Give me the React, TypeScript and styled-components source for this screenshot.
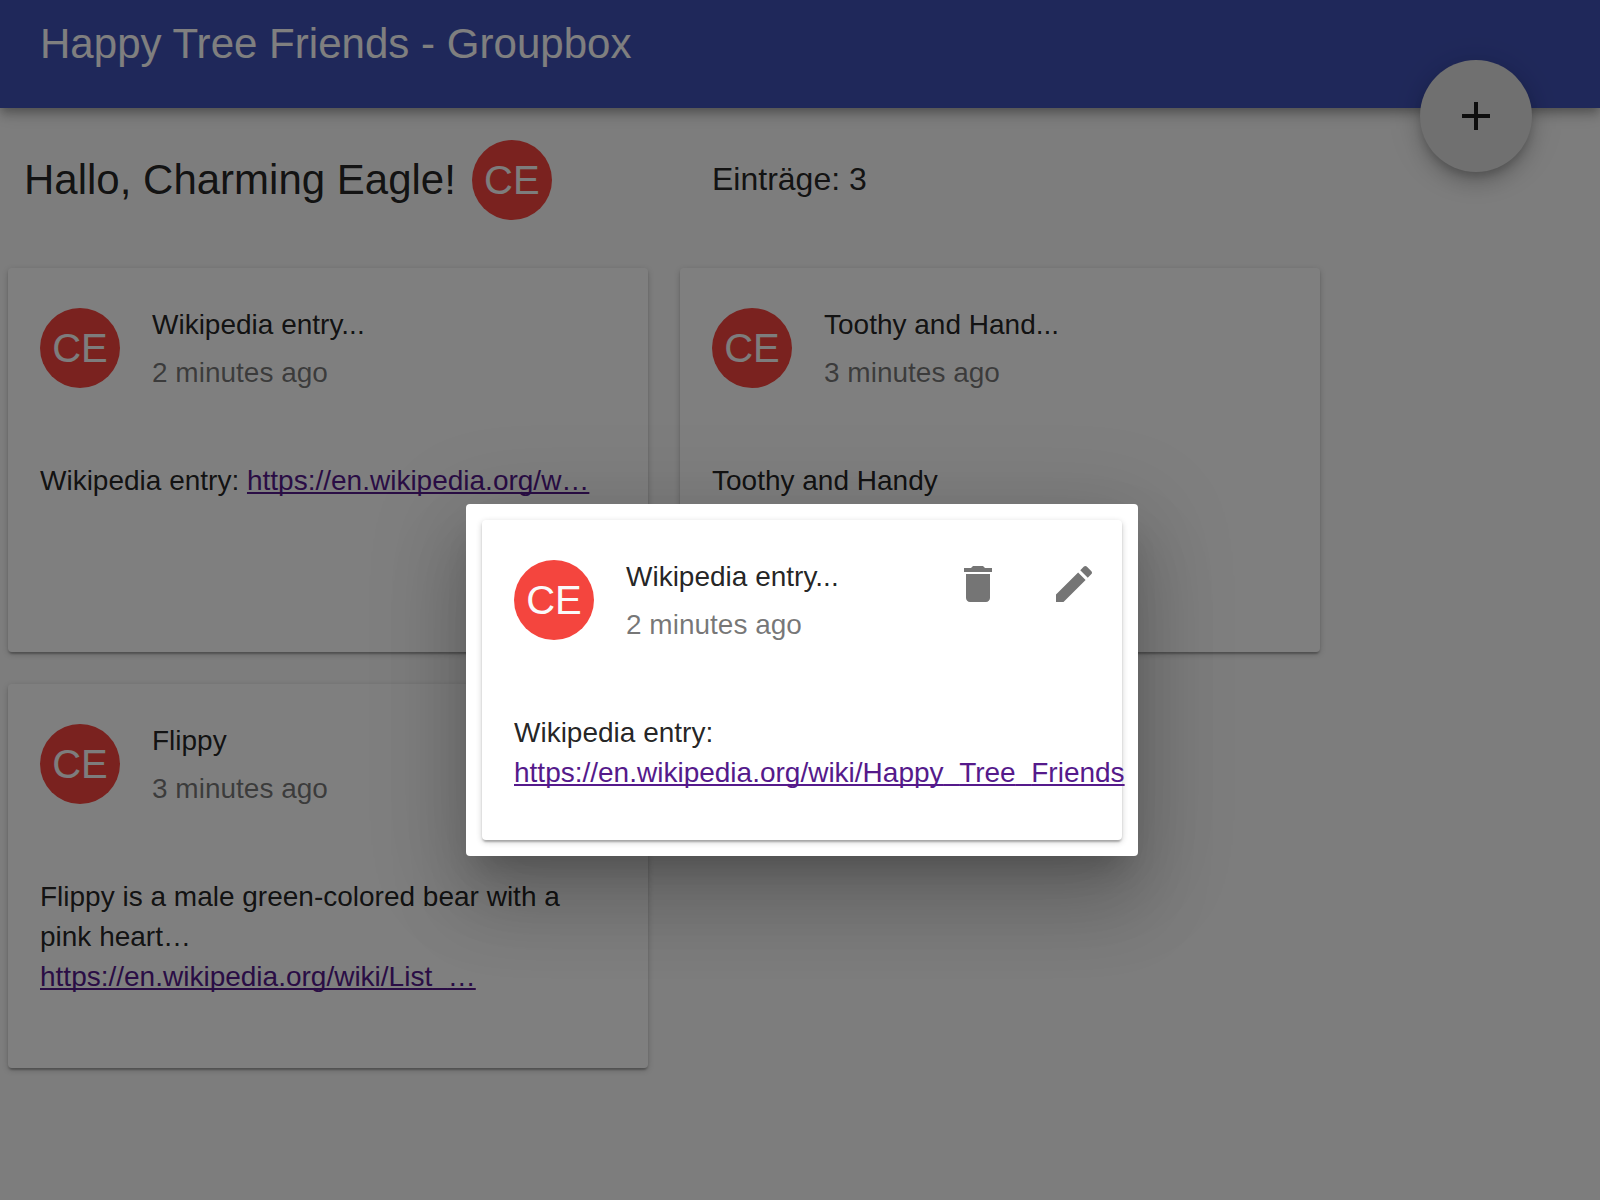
import React from 'react';
import styled, { createGlobalStyle } from 'styled-components';

const GlobalStyle = createGlobalStyle`
  * { box-sizing: border-box; }
  html, body { margin: 0; padding: 0; background: #fafafa; }
  body {
    font-family: "Liberation Sans", Arial, Helvetica, sans-serif;
    font-size: 28px;
    line-height: 40px;
    color: rgba(0, 0, 0, 0.87);
    overflow: hidden;
    -webkit-font-smoothing: antialiased;
  }
`;

const Page = styled.div`
  position: relative;
  width: 1600px;
  height: 1200px;
  overflow: hidden;
`;

const AppBar = styled.header`
  display: flex;
  align-items: flex-start;
  height: 108px;
  padding: 19px 40px;
  background: #3f51b5;
  color: #fff;
  box-shadow: 0 4px 8px -2px rgba(0, 0, 0, 0.2), 0 8px 10px 0 rgba(0, 0, 0, 0.14),
    0 2px 20px 0 rgba(0, 0, 0, 0.12);
`;

const Title = styled.h1`
  margin: 0;
  font-size: 42px;
  font-weight: 400;
  line-height: 49px;
  letter-spacing: 0.03px;
  white-space: nowrap;
`;

const Fab = styled.button`
  position: absolute;
  top: 60px;
  right: 68px;
  display: flex;
  align-items: center;
  justify-content: center;
  width: 112px;
  height: 112px;
  padding: 0;
  border: 0;
  border-radius: 50%;
  background: #e0e0e0;
  color: rgba(0, 0, 0, 0.87);
  box-shadow: 0 6px 10px -2px rgba(0, 0, 0, 0.2), 0 12px 20px 0 rgba(0, 0, 0, 0.14),
    0 2px 36px 0 rgba(0, 0, 0, 0.12);
`;

const Summary = styled.section`
  display: grid;
  grid-template-columns: 688px 1fr;
  align-items: center;
  height: 144px;
  padding: 0 24px;
`;

const Greeting = styled.div`
  display: flex;
  align-items: center;
  gap: 16px;
  font-size: 42px;
  line-height: 48px;
  white-space: nowrap;
`;

const Count = styled.div`
  padding-bottom: 2px;
  font-size: 32px;
`;

const Avatar = styled.div`
  display: flex;
  flex: none;
  align-items: center;
  justify-content: center;
  width: 80px;
  height: 80px;
  border-radius: 50%;
  background: #f4453e;
  color: #fafafa;
  font-size: 40px;
  line-height: 46px;
`;

const Board = styled.main`
  display: grid;
  grid-template-columns: 640px 640px;
  gap: 32px;
  padding: 16px 8px;
`;

const Card = styled.article<{ $height: number }>`
  height: ${(p) => p.$height}px;
  border-radius: 4px;
  background: #fff;
  box-shadow: 0 2px 6px 0 rgba(0, 0, 0, 0.2), 0 2px 2px 0 rgba(0, 0, 0, 0.14),
    0 4px 2px -2px rgba(0, 0, 0, 0.12);
`;

const CardHead = styled.header`
  display: flex;
  align-items: center;
  gap: 32px;
  height: 160px;
  padding: 32px;
`;

const Heading = styled.div`
  flex: 1;
  padding-top: 2px;
  line-height: 48px;
`;

const Name = styled.div``;

const Age = styled.div`
  color: rgba(0, 0, 0, 0.54);
`;

const Actions = styled.div`
  display: flex;
  align-self: flex-start;
  margin: -16px -32px 0 0;
`;

const IconButton = styled.button`
  display: flex;
  align-items: center;
  justify-content: center;
  width: 96px;
  height: 96px;
  padding: 0;
  border: 0;
  background: none;
  color: rgba(0, 0, 0, 0.54);
`;

const CardBody = styled.div`
  padding: 33px 32px 47px;
`;

const Link = styled.a`
  color: #551a8b;
  white-space: nowrap;
  text-decoration: underline;
  text-decoration-thickness: 2px;
  text-underline-offset: 2px;
  text-decoration-skip-ink: none;
`;

/* Lifts the underscore so that it sits on the link's underline. */
const Underscore = styled.span`
  line-height: 0;
  vertical-align: 2px;
`;

const Backdrop = styled.div`
  position: absolute;
  inset: 0;
  display: flex;
  align-items: center;
  justify-content: center;
  padding: 160px 0 0 4px;
  background: rgba(0, 0, 0, 0.5);
`;

const Dialog = styled.div`
  width: 672px;
  padding: 16px;
  border-radius: 4px;
  background: #fff;
  box-shadow: 0 22px 30px -14px rgba(0, 0, 0, 0.2), 0 48px 76px 6px rgba(0, 0, 0, 0.14),
    0 18px 92px 16px rgba(0, 0, 0, 0.12);
`;

const Icon = ({ d }: { d: string }) => (
  <svg width="48" height="48" viewBox="0 0 24 24" fill="currentColor" aria-hidden="true">
    <path d={d} />
  </svg>
);

const ADD = 'M19 13h-6v6h-2v-6H5v-2h6V5h2v6h6v2z';
const DELETE = 'M6 19c0 1.1.9 2 2 2h8c1.1 0 2-.9 2-2V7H6v12zM19 4h-3.500l-1-1h-5l-1 1H5v2h14V4z';
const EDIT =
  'M3 17.250V21h3.750L17.810 9.940l-3.750-3.750L3 17.250zM20.710 7.040c.39-.39.39-1.020 0-1.410l-2.340-2.340c-.39-.39-1.020-.39-1.410 0l-1.830 1.830 3.750 3.750 1.830-1.830z';

interface EntryProps {
  name: string;
  age: string;
  height?: number;
  actions?: React.ReactNode;
  children: React.ReactNode;
}

const Entry = ({ name, age, height = 384, actions, children }: EntryProps) => (
  <Card $height={height}>
    <CardHead>
      <Avatar>CE</Avatar>
      <Heading>
        <Name>{name}</Name>
        <Age>{age}</Age>
      </Heading>
      {actions && <Actions>{actions}</Actions>}
    </CardHead>
    <CardBody>{children}</CardBody>
  </Card>
);

export default function App() {
  return (
    <>
      <GlobalStyle />
      <Page>
        <AppBar>
          <Title>Happy Tree Friends - Groupbox</Title>
        </AppBar>
        <Fab aria-label="Add">
          <Icon d={ADD} />
        </Fab>
        <Summary>
          <Greeting>
            <span>Hallo, Charming Eagle!</span>
            <Avatar>CE</Avatar>
          </Greeting>
          <Count>Einträge: 3</Count>
        </Summary>
        <Board>
          <Entry name="Wikipedia entry..." age="2 minutes ago">
            Wikipedia entry: <Link>https://en.wikipedia.org/w…</Link>
          </Entry>
          <Entry name="Toothy and Hand..." age="3 minutes ago">
            Toothy and Handy
          </Entry>
          <Entry name="Flippy" age="3 minutes ago">
            Flippy is a male green-colored bear with a pink heart…
            <br />
            <Link>
              https://en.wikipedia.org/wiki/List<Underscore>_</Underscore>…
            </Link>
          </Entry>
        </Board>
        <Backdrop>
          <Dialog role="dialog">
            <Entry
              name="Wikipedia entry..."
              age="2 minutes ago"
              height={320}
              actions={
                <>
                  <IconButton aria-label="Delete">
                    <Icon d={DELETE} />
                  </IconButton>
                  <IconButton aria-label="Edit">
                    <Icon d={EDIT} />
                  </IconButton>
                </>
              }
            >
              Wikipedia entry:
              <br />
              <Link>
                https://en.wikipedia.org/wiki/Happy<Underscore>_</Underscore>Tree
                <Underscore>_</Underscore>Friends
              </Link>
            </Entry>
          </Dialog>
        </Backdrop>
      </Page>
    </>
  );
}
